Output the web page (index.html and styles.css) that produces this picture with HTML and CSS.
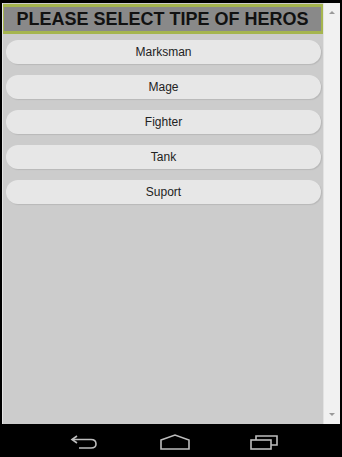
FILE: index.html
```
<!DOCTYPE html>
<html>
<head>
<meta charset="utf-8">
<link rel="stylesheet" href="styles.css">
</head>
<body>
<div class="device">
  <div class="screen">
    <div class="page">
      <div class="header">PLEASE SELECT TIPE OF HEROS</div>
      <div class="list">
        <button class="btn">Marksman</button>
        <button class="btn">Mage</button>
        <button class="btn">Fighter</button>
        <button class="btn">Tank</button>
        <button class="btn">Suport</button>
      </div>
    </div>
    <div class="scrollbar">
      <span class="arrow up"></span>
      <span class="arrow down"></span>
    </div>
  </div>
  <div class="navbar">
    <svg class="nav-icon" width="30" height="16" viewBox="0 0 30 16">
      <path d="M7 2 L2 5.5 L7 9" fill="none" stroke="#bdbdbd" stroke-width="1.6"/>
      <path d="M2.5 5.5 H21 Q26 5.5 26 10 Q26 14 21 14 H9" fill="none" stroke="#bdbdbd" stroke-width="1.6"/>
    </svg>
    <svg class="nav-icon" width="30" height="16" viewBox="0 0 30 16">
      <path d="M1 6 L15 1 L29 6 V15 H1 Z" fill="none" stroke="#bdbdbd" stroke-width="1.6"/>
    </svg>
    <svg class="nav-icon" width="30" height="16" viewBox="0 0 30 16">
      <rect x="1" y="6" width="20" height="9" fill="none" stroke="#bdbdbd" stroke-width="1.6"/>
      <path d="M6 6 V2 H27 V11 H21" fill="none" stroke="#bdbdbd" stroke-width="1.6"/>
    </svg>
  </div>
</div>
</body>
</html>
```
FILE: styles.css
```
* { box-sizing: border-box; }
html, body { margin: 0; padding: 0; background: #000; }
body { font-family: "Liberation Sans", Arial, sans-serif; }
.device {
  width: 342px;
  height: 457px;
  display: flex;
  flex-direction: column;
  background: #000;
  padding: 3px 2px 0 2px;
}
.screen {
  height: 421px;
  display: flex;
  background: #cccccc;
  border-left: 1px solid #e4e4e4;
}
.page {
  flex: 1;
  display: flex;
  flex-direction: column;
}
.header {
  height: 30px;
  background: #898989;
  border: 3px solid #a5b54e;
  border-left-width: 1px;
  border-right-width: 2px;
  color: #111;
  font-weight: bold;
  font-size: 18px;
  text-align: center;
  line-height: 24px;
  margin-top: 1px;
  white-space: nowrap;
}
.list {
  display: flex;
  flex-direction: column;
  gap: 11px;
  padding: 6px 2px 0 3px;
}
.btn {
  height: 24px;
  border: none;
  border-radius: 12px;
  background: #e7e7e7;
  box-shadow: 1px 1px 1px #b8b8b8;
  font-family: "Liberation Sans", Arial, sans-serif;
  font-size: 12px;
  color: #222;
  padding: 0;
}
.scrollbar {
  width: 17px;
  background: #f1f1f1;
  border-left: 1px solid #e2e2e2;
  display: flex;
  flex-direction: column;
  justify-content: space-between;
  align-items: center;
  padding: 8px 0 8px 0;
}
.arrow {
  width: 0;
  height: 0;
  border-left: 3px solid transparent;
  border-right: 3px solid transparent;
}
.arrow.up { border-bottom: 3px solid #999; }
.arrow.down { border-top: 3px solid #999; }
.navbar {
  flex: 1;
  display: flex;
  justify-content: center;
  align-items: center;
  gap: 60px;
  padding-left: 8px;
  padding-top: 2px;
}
```
